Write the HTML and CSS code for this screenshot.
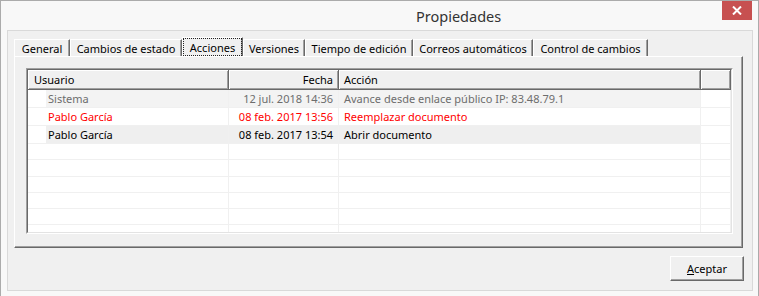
FILE: index.html
```html
<!DOCTYPE html>
<html lang="es">
<head>
    <meta charset="UTF-8">
    <title>Propiedades</title>
    <link rel="stylesheet" href="styles.css">
</head>
<body>
    <div class="window">
        <div class="titlebar">
            <div class="title">Propiedades</div>
            <div class="close">
                <svg width="10" height="9" viewBox="0 0 10 9">
                    <path d="M1 0.5 L9 8.5 M9 0.5 L1 8.5" stroke="#fff" stroke-width="2"/>
                </svg>
            </div>
        </div>

        <div class="panel">
            <!-- TABS -->
            <div class="tabs">
                <div class="tab tab-general">General</div>
                <div class="tab tab-cambios">Cambios de estado</div>
                <div class="tab tab-acciones active"><span class="focus">Acciones</span></div>
                <div class="tab tab-versiones">Versiones</div>
                <div class="tab tab-tiempo">Tiempo de edición</div>
                <div class="tab tab-correos">Correos automáticos</div>
                <div class="tab tab-control">Control de cambios</div>
            </div>

            <!-- PAGE -->
            <div class="page">
                <div class="list">
                    <div class="list-inner">
                        <div class="head">
                            <div class="hcell col-user">Usuario</div>
                            <div class="hcell col-date">Fecha</div>
                            <div class="hcell col-action">Acción</div>
                            <div class="hcell col-fill"></div>
                        </div>

                        <div class="row shade-a muted">
                            <div class="cell col-user"><span class="state"></span>Sistema</div>
                            <div class="cell col-date">12 jul. 2018 14:36</div>
                            <div class="cell col-action">Avance desde enlace público IP: 83.48.79.1</div>
                            <div class="cell col-fill"></div>
                        </div>
                        <div class="row alert">
                            <div class="cell col-user"><span class="state"></span>Pablo García</div>
                            <div class="cell col-date">08 feb. 2017 13:56</div>
                            <div class="cell col-action">Reemplazar documento</div>
                            <div class="cell col-fill"></div>
                        </div>
                        <div class="row shade-b">
                            <div class="cell col-user"><span class="state"></span>Pablo García</div>
                            <div class="cell col-date">08 feb. 2017 13:54</div>
                            <div class="cell col-action">Abrir documento</div>
                            <div class="cell col-fill"></div>
                        </div>

                        <div class="row empty"><div class="cell col-user"></div><div class="cell col-date"></div><div class="cell col-action"></div><div class="cell col-fill"></div></div>
                        <div class="row empty"><div class="cell col-user"></div><div class="cell col-date"></div><div class="cell col-action"></div><div class="cell col-fill"></div></div>
                        <div class="row empty"><div class="cell col-user"></div><div class="cell col-date"></div><div class="cell col-action"></div><div class="cell col-fill"></div></div>
                        <div class="row empty"><div class="cell col-user"></div><div class="cell col-date"></div><div class="cell col-action"></div><div class="cell col-fill"></div></div>
                        <div class="row empty"><div class="cell col-user"></div><div class="cell col-date"></div><div class="cell col-action"></div><div class="cell col-fill"></div></div>
                        <div class="row empty"><div class="cell col-user"></div><div class="cell col-date"></div><div class="cell col-action"></div><div class="cell col-fill"></div></div>
                    </div>
                </div>
            </div>

            <div class="footer">
                <button class="button"><u>A</u>ceptar</button>
            </div>
        </div>
    </div>
</body>
</html>
```

FILE: styles.css
```css
* {
    box-sizing: border-box;
}
body {
    margin: 0;
    background: #f8f8f8;
    font-family: "Noto Sans", "Open Sans", sans-serif;
    font-size: 11px;
    color: #000;
    overflow: hidden;
}
.window {
    width: 759px;
    height: 296px;
    border: 1px solid #ababab;
    border-bottom: none;
    background: #f8f8f8;
}
.titlebar {
    height: 29px;
    display: flex;
    align-items: flex-start;
}
.title {
    flex: 1;
    padding-left: 415px;
    padding-top: 5px;
    font-size: 14.5px;
    color: #333;
}
.close {
    width: 30px;
    height: 19px;
    margin-right: 6px;
    background: #c75050;
    display: flex;
    align-items: center;
    justify-content: center;
}
.panel {
    width: 746px;
    height: 261px;
    margin-left: 6px;
    padding: 6px 0 0 6px;
    border: 1px solid #d9d9d9;
    background: #f0f0f0;
}

/* tabs */
.tabs {
    display: flex;
    align-items: flex-end;
    height: 19px;
}
.tab {
    height: 17px;
    display: flex;
    align-items: center;
    justify-content: center;
    border-top: 1px solid #fff;
    border-left: 1px solid #fff;
    border-right: 1px solid #696969;
    box-shadow: inset -1px 0 0 #a0a0a0;
    white-space: nowrap;
}
.tab.active {
    height: 19px;
}
.tab .focus {
    display: flex;
    align-items: center;
    justify-content: center;
    width: 100%;
    height: 100%;
    border: 1px dotted #222;
}
.tab-general { width: 56px; }
.tab-cambios { width: 112px; }
.tab-acciones { width: 61px; }
.tab-versiones { width: 62px; }
.tab-tiempo { width: 108px; }
.tab-correos { width: 120px; }
.tab-control { width: 115px; }

/* page */
.page {
    width: 729px;
    height: 192px;
    padding: 11px 0 0 11px;
    border-top: 1px solid #fff;
    border-left: 1px solid #fff;
    border-right: 1px solid #696969;
    border-bottom: 1px solid #696969;
    box-shadow: inset -1px -1px 0 #a0a0a0;
}
.list {
    width: 707px;
    height: 166px;
    border-top: 1px solid #a0a0a0;
    border-left: 1px solid #a0a0a0;
    border-right: 1px solid #fff;
    border-bottom: 1px solid #fff;
}
.list-inner {
    height: 100%;
    overflow: hidden;
    background: #fff;
    border-top: 1px solid #696969;
    border-left: 1px solid #696969;
    border-right: 1px solid #e3e3e3;
    border-bottom: 1px solid #e3e3e3;
}
.head {
    display: flex;
    height: 20px;
}
.hcell {
    height: 20px;
    display: flex;
    align-items: center;
    padding: 0 5px;
    background: #f0f0f0;
    border-right: 1px solid #696969;
    border-bottom: 1px solid #696969;
    box-shadow: inset 1px 1px 0 #fff, inset -1px -1px 0 #a0a0a0;
}
.col-user { width: 201px; }
.col-date { width: 110px; justify-content: flex-end; }
.col-action { width: 362px; }
.col-fill { flex: 1; }
.hcell.col-user { padding-left: 6px; }

.row {
    display: flex;
    height: 18px;
}
.row.empty {
    height: 16.25px;
}
.cell {
    display: flex;
    align-items: center;
    padding: 0 5px;
    white-space: nowrap;
    border-right: 1px solid #f0f0f0;
    border-bottom: 1px solid #f0f0f0;
}
.cell.col-user {
    padding-left: 0;
}
.cell.col-date {
    padding-right: 5px;
}
.state {
    width: 18px;
    height: 100%;
    margin-right: 2px;
    background: #fff;
}
.shade-a .cell:not(.col-fill) {
    background: #f3f3f3;
}
.shade-b .cell:not(.col-fill) {
    background: #efefef;
}
.muted {
    color: #6d6d6d;
}
.alert {
    color: #f00;
}

/* footer */
.footer {
    display: flex;
    justify-content: flex-end;
    padding: 8px 8px 0 0;
}
.button {
    width: 74px;
    height: 25px;
    padding: 0;
    font-family: inherit;
    font-size: 11px;
    color: #000;
    background: #f0f0f0;
    border-top: 1px solid #fff;
    border-left: 1px solid #fff;
    border-right: 1px solid #696969;
    border-bottom: 1px solid #696969;
    box-shadow: inset -1px -1px 0 #a0a0a0;
}
```
